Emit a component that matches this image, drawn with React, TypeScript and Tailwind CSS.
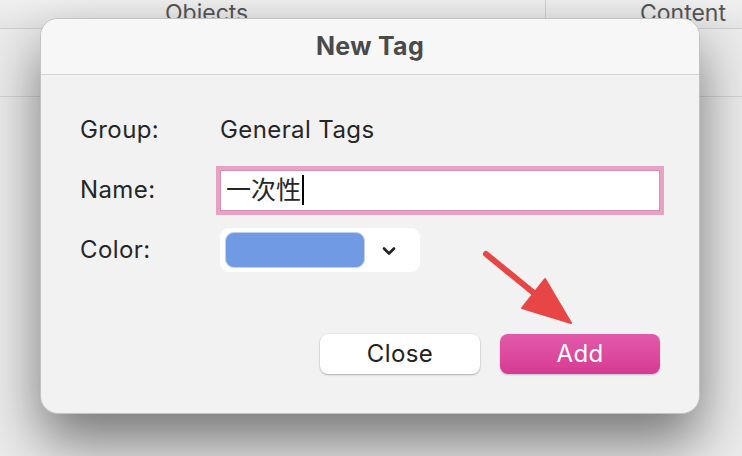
import React from "react";

const font = { fontFamily: "Inter, 'Noto Sans CJK SC', sans-serif" };

function Chevron() {
  return (
    <svg width="14" height="10" viewBox="0 0 14 10" className="text-[#222]">
      <path d="M2 2.5 L7 7.5 L12 2.5" fill="none" stroke="currentColor" strokeWidth="2.6" strokeLinecap="round" strokeLinejoin="round" />
    </svg>
  );
}

function Arrow() {
  return (
    <svg width="742" height="456" className="absolute left-0 top-0 pointer-events-none">
      <line x1="486" y1="254" x2="540" y2="298" stroke="#e84646" strokeWidth="6" strokeLinecap="round" />
      <polygon points="545,279 571,323 522,308" fill="#e84646" stroke="#e84646" strokeWidth="2" strokeLinejoin="round" />
    </svg>
  );
}

export default function App() {
  return (
    <div className="relative w-[742px] h-[456px] overflow-hidden bg-[#ececec]" style={font}>
      {/* table behind the sheet */}
      <div className="flex h-[29px] border-b border-[#cfcfcf] bg-gradient-to-b from-[#f0f0f0] to-[#e6e6e6] text-[23px] text-[#555] leading-none">
        <div className="w-[546px] border-r border-[#d0d0d0] flex items-end pl-[165px] pb-[3px]">Objects</div>
        <div className="flex-1 flex items-end justify-end pr-[16px] pb-[3px]">Content</div>
      </div>
      <div className="h-[68px] border-b border-[#d3d3d3] bg-[#ececec]" />

      {/* sheet */}
      <div className="absolute left-[40px] top-[18px] w-[660px] h-[396px] rounded-[18px] border border-[#c2c2c2] bg-[#f2f2f2] shadow-[0_28px_56px_rgba(0,0,0,0.5)] overflow-hidden flex flex-col">
        <div className="h-[56px] shrink-0 bg-[#f7f7f7] border-b border-[#d2d2d2] flex items-center justify-center">
          <span className="text-[25px] font-bold text-[#4a4a4a] tracking-[0.3px]">New Tag</span>
        </div>
        <div className="flex-1 flex flex-col pt-[25px] pl-[39px] pr-[39px] pb-[39px] text-[24px] tracking-[0.4px] text-[#262626]">
          <div className="flex items-center h-[60px]">
            <span className="w-[140px]">Group:</span>
            <span>General Tags</span>
          </div>
          <div className="flex items-center h-[60px]">
            <span className="w-[140px]">Name:</span>
            <div className="w-[440px] h-[41px] bg-white border border-[#d68fb1] shadow-[0_0_0_4px_#e8a2c4] flex items-center pl-[5px]">
              <span className="text-[25px] leading-none tracking-normal">一次性</span>
              <span className="w-[2px] h-[30px] bg-black ml-[1px]" />
            </div>
          </div>
          <div className="flex items-center h-[60px]">
            <span className="w-[140px]">Color:</span>
            <div className="w-[200px] h-[44px] bg-white rounded-[9px] flex items-center pl-[5px]">
              <div className="w-[140px] h-[36px] rounded-[9px] bg-[#709ae3] border border-[#c4d0e4]" />
              <div className="flex-1 flex items-center justify-center pr-[8px] pt-[2px]">
                <Chevron />
              </div>
            </div>
          </div>
          <div className="flex-1" />
          <div className="flex justify-end gap-[20px]">
            <button className="w-[160px] h-[40px] rounded-[8px] bg-white shadow-[0_1px_2px_rgba(0,0,0,0.25),0_0_0_0.5px_rgba(0,0,0,0.08)] text-[24px] tracking-[0.4px] text-[#222]">
              Close
            </button>
            <button className="w-[160px] h-[40px] rounded-[8px] bg-gradient-to-b from-[#e25aab] to-[#d73993] shadow-[0_1px_2px_rgba(0,0,0,0.2)] text-[24px] tracking-[0.4px] text-white">
              Add
            </button>
          </div>
        </div>
      </div>
      <Arrow />
    </div>
  );
}
